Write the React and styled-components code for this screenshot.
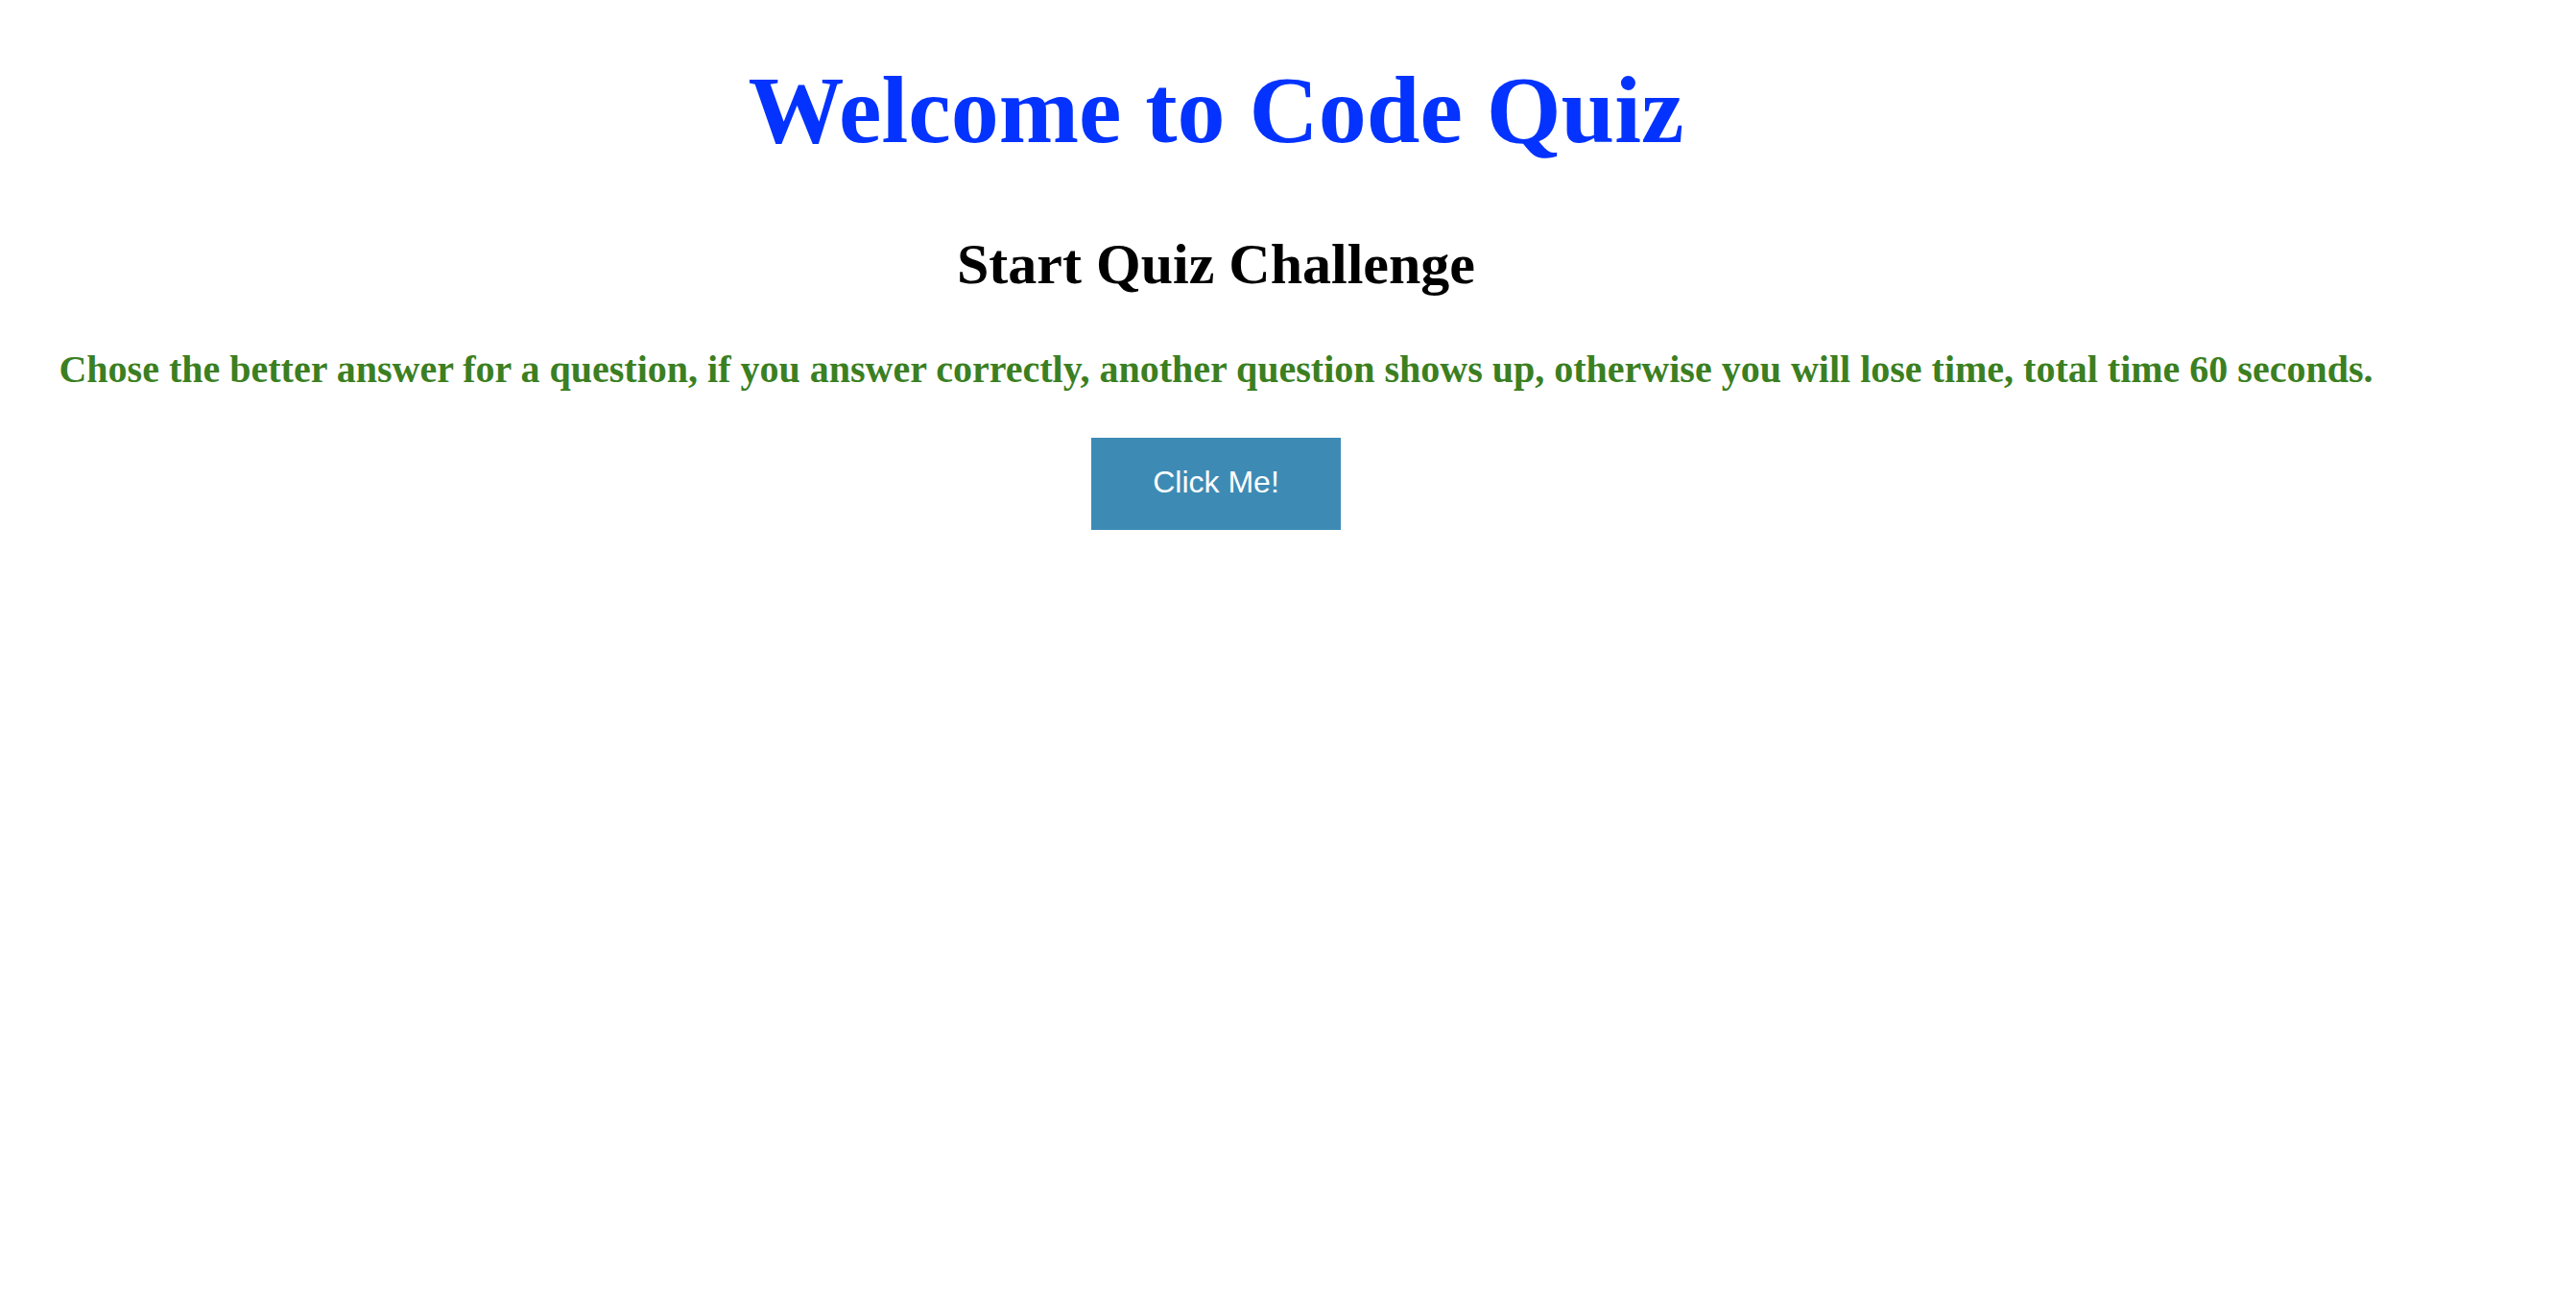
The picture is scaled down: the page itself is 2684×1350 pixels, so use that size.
import React from "react";
import styled, { createGlobalStyle } from "styled-components";

const GlobalStyle = createGlobalStyle`
  html, body {
    margin: 0;
    padding: 0;
    background: #ffffff;
  }
  body {
    font-family: "Liberation Serif", "Times New Roman", serif;
  }
`;

const Page = styled.main`
  width: 2534px;
  display: flex;
  flex-direction: column;
  align-items: center;
  text-align: center;
`;

const Title = styled.h1`
  margin: 65px 0 0;
  font-size: 100px;
  line-height: 1;
  font-weight: bold;
  color: #0433ff;
`;

const Subtitle = styled.h2`
  margin: 80px 0 0;
  font-size: 60px;
  line-height: 1;
  font-weight: bold;
  color: #000000;
`;

const Intro = styled.p`
  margin: 60px 0 0;
  font-size: 40px;
  line-height: 1;
  font-weight: bold;
  color: #3b7f22;
  white-space: nowrap;
`;

const StartButton = styled.button`
  margin-top: 51px;
  width: 260px;
  height: 96px;
  padding: 0 0 4px;
  display: flex;
  align-items: center;
  justify-content: center;
  border: none;
  border-radius: 0;
  background: #3d8bb5;
  color: #ffffff;
  font-family: "Liberation Sans", Arial, sans-serif;
  font-size: 32px;
  cursor: pointer;
`;

export default function App() {
  return (
    <>
      <GlobalStyle />
      <Page>
        <Title>Welcome to Code Quiz</Title>
        <Subtitle>Start Quiz Challenge</Subtitle>
        <Intro>
          Chose the better answer for a question, if you answer correctly, another question shows up, otherwise you will lose time, total time 60 seconds.
        </Intro>
        <StartButton type="button">Click Me!</StartButton>
      </Page>
    </>
  );
}
